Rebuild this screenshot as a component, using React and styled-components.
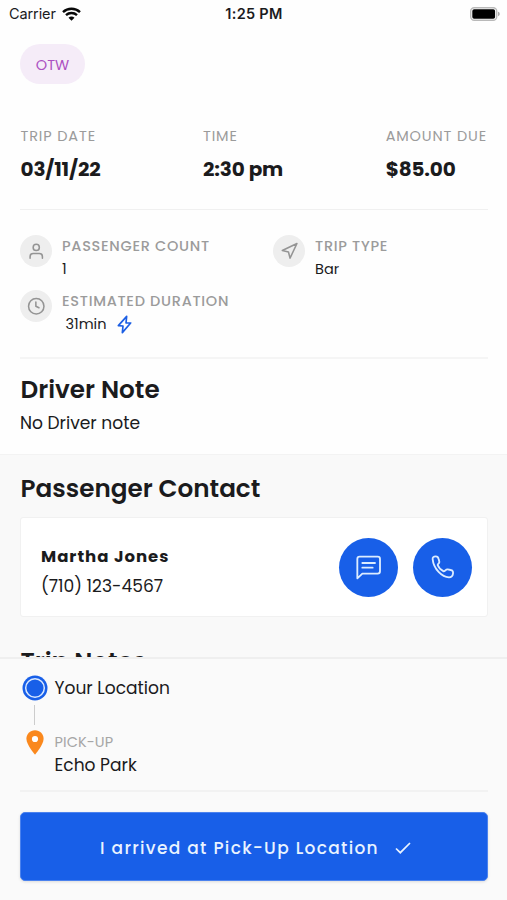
import React from 'react'
import styled, { createGlobalStyle } from 'styled-components';

const GlobalStyle = createGlobalStyle`
    * { box-sizing: border-box; }
    body {
        margin: 0;
        background: #fefefe;
        font-family: Poppins, Inter, "Open Sans", sans-serif;
        color: #1b1b1d;
    }
`;

const Screen = styled.div`
    display: flex;
    flex-direction: column;
    width: 507px;
    height: 900px;
    overflow: hidden;
    background: #fefefe;
`;

const StatusBar = styled.header`
    display: grid;
    grid-template-columns: 1fr auto 1fr;
    align-items: center;
    flex: none;
    height: 28px;
    padding: 0 7px 1px 9px;
    font-family: Inter, sans-serif;
    font-size: 14.5px;
`;

const Carrier = styled.div`
    display: flex;
    align-items: center;
    gap: 6px;
    letter-spacing: -0.1px;
`;

const Clock = styled.div`
    margin-right: 1px;
    font-size: 14.5px;
    font-weight: 600;
    letter-spacing: 0.3px;
`;

const Battery = styled.svg`
    justify-self: end;
`;

const Content = styled.main`
    flex: 1;
    min-height: 0;
    overflow: hidden;
`;

const Trip = styled.section`
    height: 426px;
    padding: 16px 19px 0 20px;
`;

const Chip = styled.div`
    display: flex;
    align-items: center;
    justify-content: center;
    width: 65px;
    height: 40px;
    padding-top: 2px;
    border-radius: 20px;
    background: #f5ecf8;
    color: #ac51c2;
    font-size: 14.5px;
`;

const Stats = styled.div`
    display: flex;
    justify-content: space-between;
    height: 126px;
    padding: 42px 1px 0 0.5px;
    border-bottom: 1px solid #f0f0f0;
`;

const Label = styled.div`
    color: ${p => p.$color || '#9b9b9b'};
    font-size: 14.5px;
    line-height: ${p => p.$line || 23}px;
    letter-spacing: ${p => p.$spacing || 0.7}px;
    font-weight: ${p => p.$weight || 400};
    white-space: nowrap;
`;

const StatValue = styled.div`
    margin-top: 8px;
    font-size: 20px;
    font-weight: 700;
    line-height: 28px;
    letter-spacing: -0.15px;
`;

const Details = styled.div`
    display: grid;
    grid-template-columns: 253px 1fr;
    grid-auto-rows: 55px;
    height: 149px;
    padding-top: 25px;
    border-bottom: 2px solid #f5f5f5;
`;

const Detail = styled.div`
    display: flex;
    gap: 10px;
`;

const DetailIcon = styled.div`
    display: flex;
    align-items: center;
    justify-content: center;
    flex: none;
    width: 32px;
    height: 32px;
    border-radius: 50%;
    background: #eeeeee;
    color: #949494;
`;

const DetailValue = styled.div`
    display: flex;
    align-items: center;
    height: 23px;
    padding-left: ${p => p.$indent || 0}px;
    gap: 11px;
    font-size: 14.5px;
`;

const Title = styled.h2`
    margin: 0;
    padding-left: 0.5px;
    font-size: 24.7px;
    font-weight: 600;
    line-height: 32px;
`;

const NoteTitle = styled(Title)`
    margin-top: 15px;
`;

const Text = styled.div`
    font-size: 17.1px;
    line-height: ${p => p.$line || 35}px;
    white-space: nowrap;
`;

const Contact = styled.section`
    padding: 18px 19px 0 20px;
    border-top: 1px solid #f3f3f3;
    background: #f9f9f9;
`;

const ContactCard = styled.div`
    display: flex;
    align-items: center;
    gap: 15px;
    height: 100px;
    margin: 12px 0 29px;
    padding: 0 15px 0 20px;
    border: 1px solid #f1f1f1;
    border-radius: 3px;
    background: #ffffff;
`;

const Person = styled.div`
    flex: 1;
    padding-top: 8px;
`;

const PersonName = styled.div`
    font-size: 16.5px;
    font-weight: 700;
    line-height: 29px;
    letter-spacing: 1px;
`;

const RoundButton = styled.button`
    display: flex;
    align-items: center;
    justify-content: center;
    width: 59px;
    height: 59px;
    padding: 0;
    border: 0;
    border-radius: 50%;
    background: #185fe8;
    color: #dcecff;
`;

const Footer = styled.footer`
    flex: none;
    height: 243px;
    padding: 16px 19px 0 20px;
    border-top: 2px solid #efefef;
    background: #fafafa;
`;

const Route = styled.div`
    display: grid;
    grid-template-columns: 30px 1fr;
    column-gap: 4px;
    height: 117px;
    border-bottom: 2px solid #f2f2f2;
`;

const Track = styled.div`
    display: flex;
    flex-direction: column;
    align-items: center;
`;

const Line = styled.div`
    width: 1px;
    height: 20px;
    margin: 4px 1px 5px 0;
    background: #cccccc;
`;

const Stops = styled.div`
    padding: 1px 0 0 0.5px;
`;

const PickUp = styled.div`
    margin-top: 30px;
`;

const ArriveButton = styled.button`
    display: flex;
    align-items: center;
    justify-content: center;
    gap: 16px;
    width: 100%;
    height: 69px;
    margin-top: 20px;
    padding: 2px 0 0 3px;
    border: 1px solid #4b82ee;
    border-radius: 5px;
    background: #185fe8;
    box-shadow: 0 1px 3px rgba(0, 0, 0, 0.12);
    color: #e9f3ff;
    font-family: inherit;
    font-size: 17px;
    font-weight: 500;
    letter-spacing: 1.3px;
`;

const Icon = ({ size = 18.5, children, ...rest }) => (
    <svg
        width={size}
        height={size}
        viewBox="0 0 24 24"
        fill="none"
        stroke="currentColor"
        strokeWidth="2"
        strokeLinecap="round"
        strokeLinejoin="round"
        {...rest}
    >
        {children}
    </svg>
);

const UserIcon = () => (
    <Icon>
        <path d="M20 21v-2a4 4 0 0 0-4-4H8a4 4 0 0 0-4 4v2" />
        <circle cx="12" cy="7" r="4" />
    </Icon>
);

const NavigationIcon = () => (
    <Icon>
        <path d="M3 11 22 2 13 21 11 13Z" />
    </Icon>
);

const ClockIcon = () => (
    <Icon>
        <circle cx="12" cy="12" r="10" />
        <path d="M11.5 6.500V12L15.500 14" />
    </Icon>
);

const ZapIcon = () => (
    <Icon width="15" height="19" viewBox="0 0 45 57" color="#1d5fe4" strokeWidth="5">
        <path d="M29 4 4 32 18 33 16 53 41 24 27 24Z" />
    </Icon>
);

const ChatIcon = () => (
    <Icon size={25} viewBox="0 0 75 75" strokeWidth="5.500">
        <path d="M4 70V12a7 7 0 0 1 7-7h54a7 7 0 0 1 7 7v37a7 7 0 0 1-7 7H19Z" />
        <path d="M19 24h38M19 38h31" />
    </Icon>
);

const PhoneIcon = () => (
    <Icon size={24} viewBox="0 0 72 72" strokeWidth="5.500">
        <path d="M5 13C4 7 8 4 14 4c5 0 8 3 9 8l2 8c1 5-5 6-5 10 3 8 10 15 18 19 5 0 6-7 12-6l9 2c6 1 8 5 7 11-1 8-5 11-12 11C33 66 8 42 5 13Z" />
    </Icon>
);

const WifiIcon = () => (
    <svg width="19" height="14" viewBox="0 0 19 14" fill="none" stroke="#080808" strokeWidth="2.400">
        <path d="M1 5.100C5.700.600 13.300.600 18 5.100M4 8.200c3.100-2.900 7.900-2.900 11 0" />
        <path d="M6.500 10.700c1.700-1.500 4.300-1.500 6 0L9.500 13.700Z" fill="#080808" stroke="none" />
    </svg>
);

export default function App() {

    return (
        <Screen>
            <GlobalStyle />
            <StatusBar>
                <Carrier>
                    <span>Carrier</span>
                    <WifiIcon />
                </Carrier>
                <Clock>1:25 PM</Clock>
                <Battery width="30" height="14" viewBox="0 0 30 14">
                    <rect x="0.700" y="0.700" width="26" height="12.600" rx="3.500" fill="#fff" stroke="#b9b9b9" strokeWidth="1.400" />
                    <rect x="2.300" y="2.300" width="22.800" height="9.400" rx="1.800" fill="#000" />
                    <path d="M28 4.800c2.300.600 2.300 3.800 0 4.400Z" fill="#aaa" />
                </Battery>
            </StatusBar>

            <Content>
                <Trip>
                    <Chip>OTW</Chip>
                    <Stats>
                        <div>
                            <Label $line={21} $spacing={0.85}>TRIP DATE</Label>
                            <StatValue>03/11/22</StatValue>
                        </div>
                        <div>
                            <Label $line={21} $spacing={0.85}>TIME</Label>
                            <StatValue>2:30 pm</StatValue>
                        </div>
                        <div>
                            <Label $line={21} $spacing={0.85}>AMOUNT DUE</Label>
                            <StatValue>$85.00</StatValue>
                        </div>
                    </Stats>
                    <Details>
                        <Detail>
                            <DetailIcon><UserIcon /></DetailIcon>
                            <div>
                                <Label $weight={500}>PASSENGER COUNT</Label>
                                <DetailValue>1</DetailValue>
                            </div>
                        </Detail>
                        <Detail>
                            <DetailIcon><NavigationIcon /></DetailIcon>
                            <div>
                                <Label $weight={500}>TRIP TYPE</Label>
                                <DetailValue>Bar</DetailValue>
                            </div>
                        </Detail>
                        <Detail>
                            <DetailIcon><ClockIcon /></DetailIcon>
                            <div>
                                <Label $weight={500}>ESTIMATED DURATION</Label>
                                <DetailValue $indent={3.5}>31min <ZapIcon /></DetailValue>
                            </div>
                        </Detail>
                    </Details>
                    <NoteTitle>Driver Note</NoteTitle>
                    <Text>No Driver note</Text>
                </Trip>

                <Contact>
                    <Title>Passenger Contact</Title>
                    <ContactCard>
                        <Person>
                            <PersonName>Martha Jones</PersonName>
                            <Text $line={30}>(710) 123-4567</Text>
                        </Person>
                        <RoundButton aria-label="Message"><ChatIcon /></RoundButton>
                        <RoundButton aria-label="Call"><PhoneIcon /></RoundButton>
                    </ContactCard>
                    <Title>Trip Notes</Title>
                </Contact>
            </Content>

            <Footer>
                <Route>
                    <Track>
                        <svg width="26" height="26" viewBox="0 0 26 26">
                            <circle cx="13" cy="13" r="12.500" fill="#185fe8" />
                            <circle cx="13" cy="13" r="9.300" fill="none" stroke="#d9e8ff" strokeWidth="1.500" />
                        </svg>
                        <Line />
                        <svg width="18" height="25" viewBox="0 0 18 25">
                            <path d="M9 .300C4 .300.400 4 .400 8.800.400 15 9 24.600 9 24.600S17.600 15 17.600 8.800C17.600 4 14 .300 9 .300Z" fill="#fa881d" />
                            <circle cx="9" cy="9" r="3.100" fill="#fff" />
                        </svg>
                    </Track>
                    <Stops>
                        <Text $line={25}>Your Location</Text>
                        <PickUp>
                            <Label $spacing={0.1} $color="#a6a6a6">PICK-UP</Label>
                            <Text $line={23}>Echo Park</Text>
                        </PickUp>
                    </Stops>
                </Route>
                <ArriveButton>
                    <span>I arrived at Pick-Up Location</span>
                    <svg width="16" height="12" viewBox="0 0 16 12" fill="none" stroke="currentColor" strokeWidth="1.700">
                        <path d="M1 6.500 5.300 10.700 15 1" />
                    </svg>
                </ArriveButton>
            </Footer>
        </Screen>
    )
}
